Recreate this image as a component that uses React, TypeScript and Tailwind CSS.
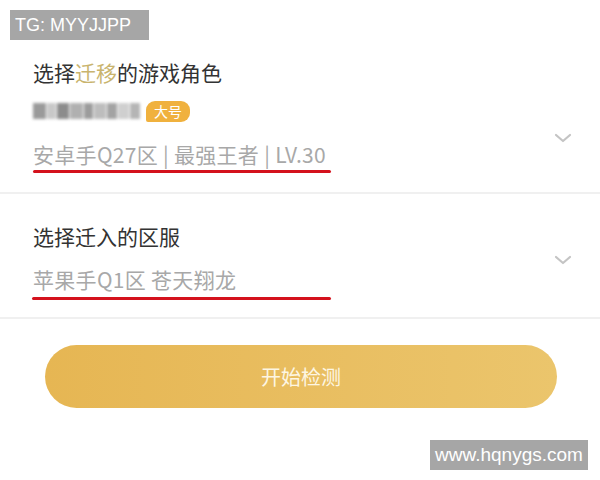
import React from "react";

function Chevron() {
  return (
    <svg width="18" height="10" viewBox="0 0 18 10" fill="none">
      <path d="M2 2l7 6 7-6" stroke="#c4c4c4" strokeWidth="2.2" strokeLinecap="round" strokeLinejoin="round" />
    </svg>
  );
}

function BlurredName() {
  const blocks = [
    { w: 13, c: "#9a9a9a" },
    { w: 9, c: "#c8c8c8" },
    { w: 12, c: "#8c8c8c" },
    { w: 13, c: "#b0b0b0" },
    { w: 9, c: "#9c9c9c" },
    { w: 12, c: "#bdbdbd" },
    { w: 10, c: "#a3a3a3" },
    { w: 11, c: "#cfcfcf" },
    { w: 10, c: "#b5b5b5" },
  ];
  return (
    <div className="flex h-[20px] items-center gap-[1px] blur-[1.5px]">
      {blocks.map((b, i) => (
        <div key={i} className="h-[16px]" style={{ width: b.w, background: b.c }} />
      ))}
    </div>
  );
}

export default function App() {
  return (
    <div
      className="relative w-[600px] h-[480px] overflow-hidden bg-white"
      style={{ fontFamily: '"Noto Sans CJK SC", "Noto Sans", sans-serif' }}
    >
      {/* section 1 */}
      <div className="flex pt-[58px] pl-[33px] pr-[28px]">
        <div className="flex-1 flex flex-col">
          <div className="text-[21px] leading-[28px] text-[#333333]">
            选择<span className="text-[#c9b46e]">迁移</span>的游戏角色
          </div>
          <div className="mt-[14px] flex items-center gap-[6px] h-[22px]">
            <BlurredName />
            <span className="rounded-[9px] rounded-bl-[2px] bg-[#f0b13e] px-[8px] text-[14px] leading-[21px] text-white">
              大号
            </span>
          </div>
          <div className="mt-[18px] text-[21px] leading-[28px] tracking-[0.3px] text-[#a8a8a8]">
            安卓手Q27区 | 最强王者 | LV.30
          </div>
          <div className="mt-[2px] h-[3px] w-[298px] rounded-full bg-[#d4121d]" />
        </div>
        <div className="mt-[75px]">
          <Chevron />
        </div>
      </div>
      <div className="mt-[19px] h-[2px] bg-[#f0f0f0]" />

      {/* section 2 */}
      <div className="flex pt-[28px] pl-[33px] pr-[28px]">
        <div className="flex-1 flex flex-col">
          <div className="text-[21px] leading-[28px] text-[#333333]">选择迁入的区服</div>
          <div className="mt-[15px] text-[21px] leading-[28px] tracking-[0.3px] text-[#a8a8a8]">苹果手Q1区 苍天翔龙</div>
          <div className="mt-[4px] -ml-[1px] h-[3px] w-[299px] rounded-full bg-[#d4121d]" />
        </div>
        <div className="mt-[33px]">
          <Chevron />
        </div>
      </div>
      <div className="mt-[17px] h-[2px] bg-[#f0f0f0]" />

      {/* button */}
      <div className="mt-[26px] pl-[45px] pr-[43px]">
        <div className="flex h-[63px] items-center justify-center rounded-full bg-gradient-to-r from-[#e6b653] to-[#ebc56c] text-[20px] text-[#fdf6e3]">
          开始检测
        </div>
      </div>

      {/* watermarks */}
      <div
        className="absolute left-[10px] top-[10px] flex h-[30px] w-[139px] items-center bg-[#a6a6a6] pl-[5px] text-[18px] text-white"
        style={{ fontFamily: '"Liberation Sans", Arial, sans-serif' }}
      >
        TG: MYYJJPP
      </div>
      <div
        className="absolute left-[430px] top-[440px] flex h-[30px] w-[158px] items-center justify-center bg-[#a6a6a6] text-[19px] text-white"
        style={{ fontFamily: '"Liberation Sans", Arial, sans-serif' }}
      >
        www.hqnygs.com
      </div>
    </div>
  );
}
